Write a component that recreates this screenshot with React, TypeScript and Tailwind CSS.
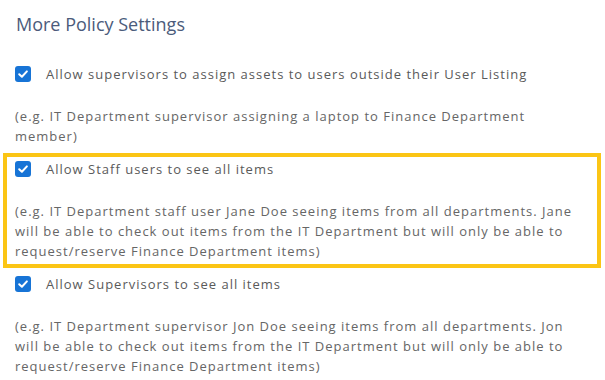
const items = [
  {
    label: "Allow supervisors to assign assets to users outside their User Listing",
    desc: "(e.g. IT Department supervisor assigning a laptop to Finance Department member)",
    highlight: false,
  },
  {
    label: "Allow Staff users to see all items",
    desc: "(e.g. IT Department staff user Jane Doe seeing items from all departments. Jane will be able to check out items from the IT Department but will only be able to request/reserve Finance Department items)",
    highlight: true,
  },
  {
    label: "Allow Supervisors to see all items",
    desc: "(e.g. IT Department supervisor Jon Doe seeing items from all departments. Jon will be able to check out items from the IT Department but will only be able to request/reserve Finance Department items)",
    highlight: false,
  },
];

function CheckBox() {
  return (
    <span className="flex h-4 w-4 shrink-0 items-center justify-center rounded-[3px] bg-[#1774d6]">
      <svg width="12" height="12" viewBox="0 0 12 12" fill="none">
        <path d="M2.2 6.2 L4.9 8.8 L9.9 3.4" stroke="white" strokeWidth="2" strokeLinecap="round" strokeLinejoin="round" />
      </svg>
    </span>
  );
}

export default function App() {
  return (
    <div
      className="h-[380px] w-[605px] overflow-hidden bg-white"
      style={{ fontFamily: '"Open Sans", "Noto Sans", sans-serif' }}
    >
      <h1 className="px-4 pt-[11px] text-[18px] leading-[26px] font-normal text-[#4b5b7b]">
        More Policy Settings
      </h1>

      <div className="mt-[21px] flex flex-col pl-[3px] pr-[4px]">
        {items.map((item, i) => (
          <div
            key={i}
            className={`border-4 px-2 pt-[2px] pb-[3px] ${
              item.highlight ? "border-[#fbc515]" : "border-transparent"
            }`}
          >
            <label className="flex items-center gap-[15px] text-[13px] leading-5 tracking-[1px] text-[#5a5a5a]">
              <CheckBox />
              <span>{item.label}</span>
            </label>
            <p className="mt-[22px] text-[13px] leading-5 tracking-[1px] text-[#666666]">
              {item.desc}
            </p>
          </div>
        ))}
      </div>
    </div>
  );
}
